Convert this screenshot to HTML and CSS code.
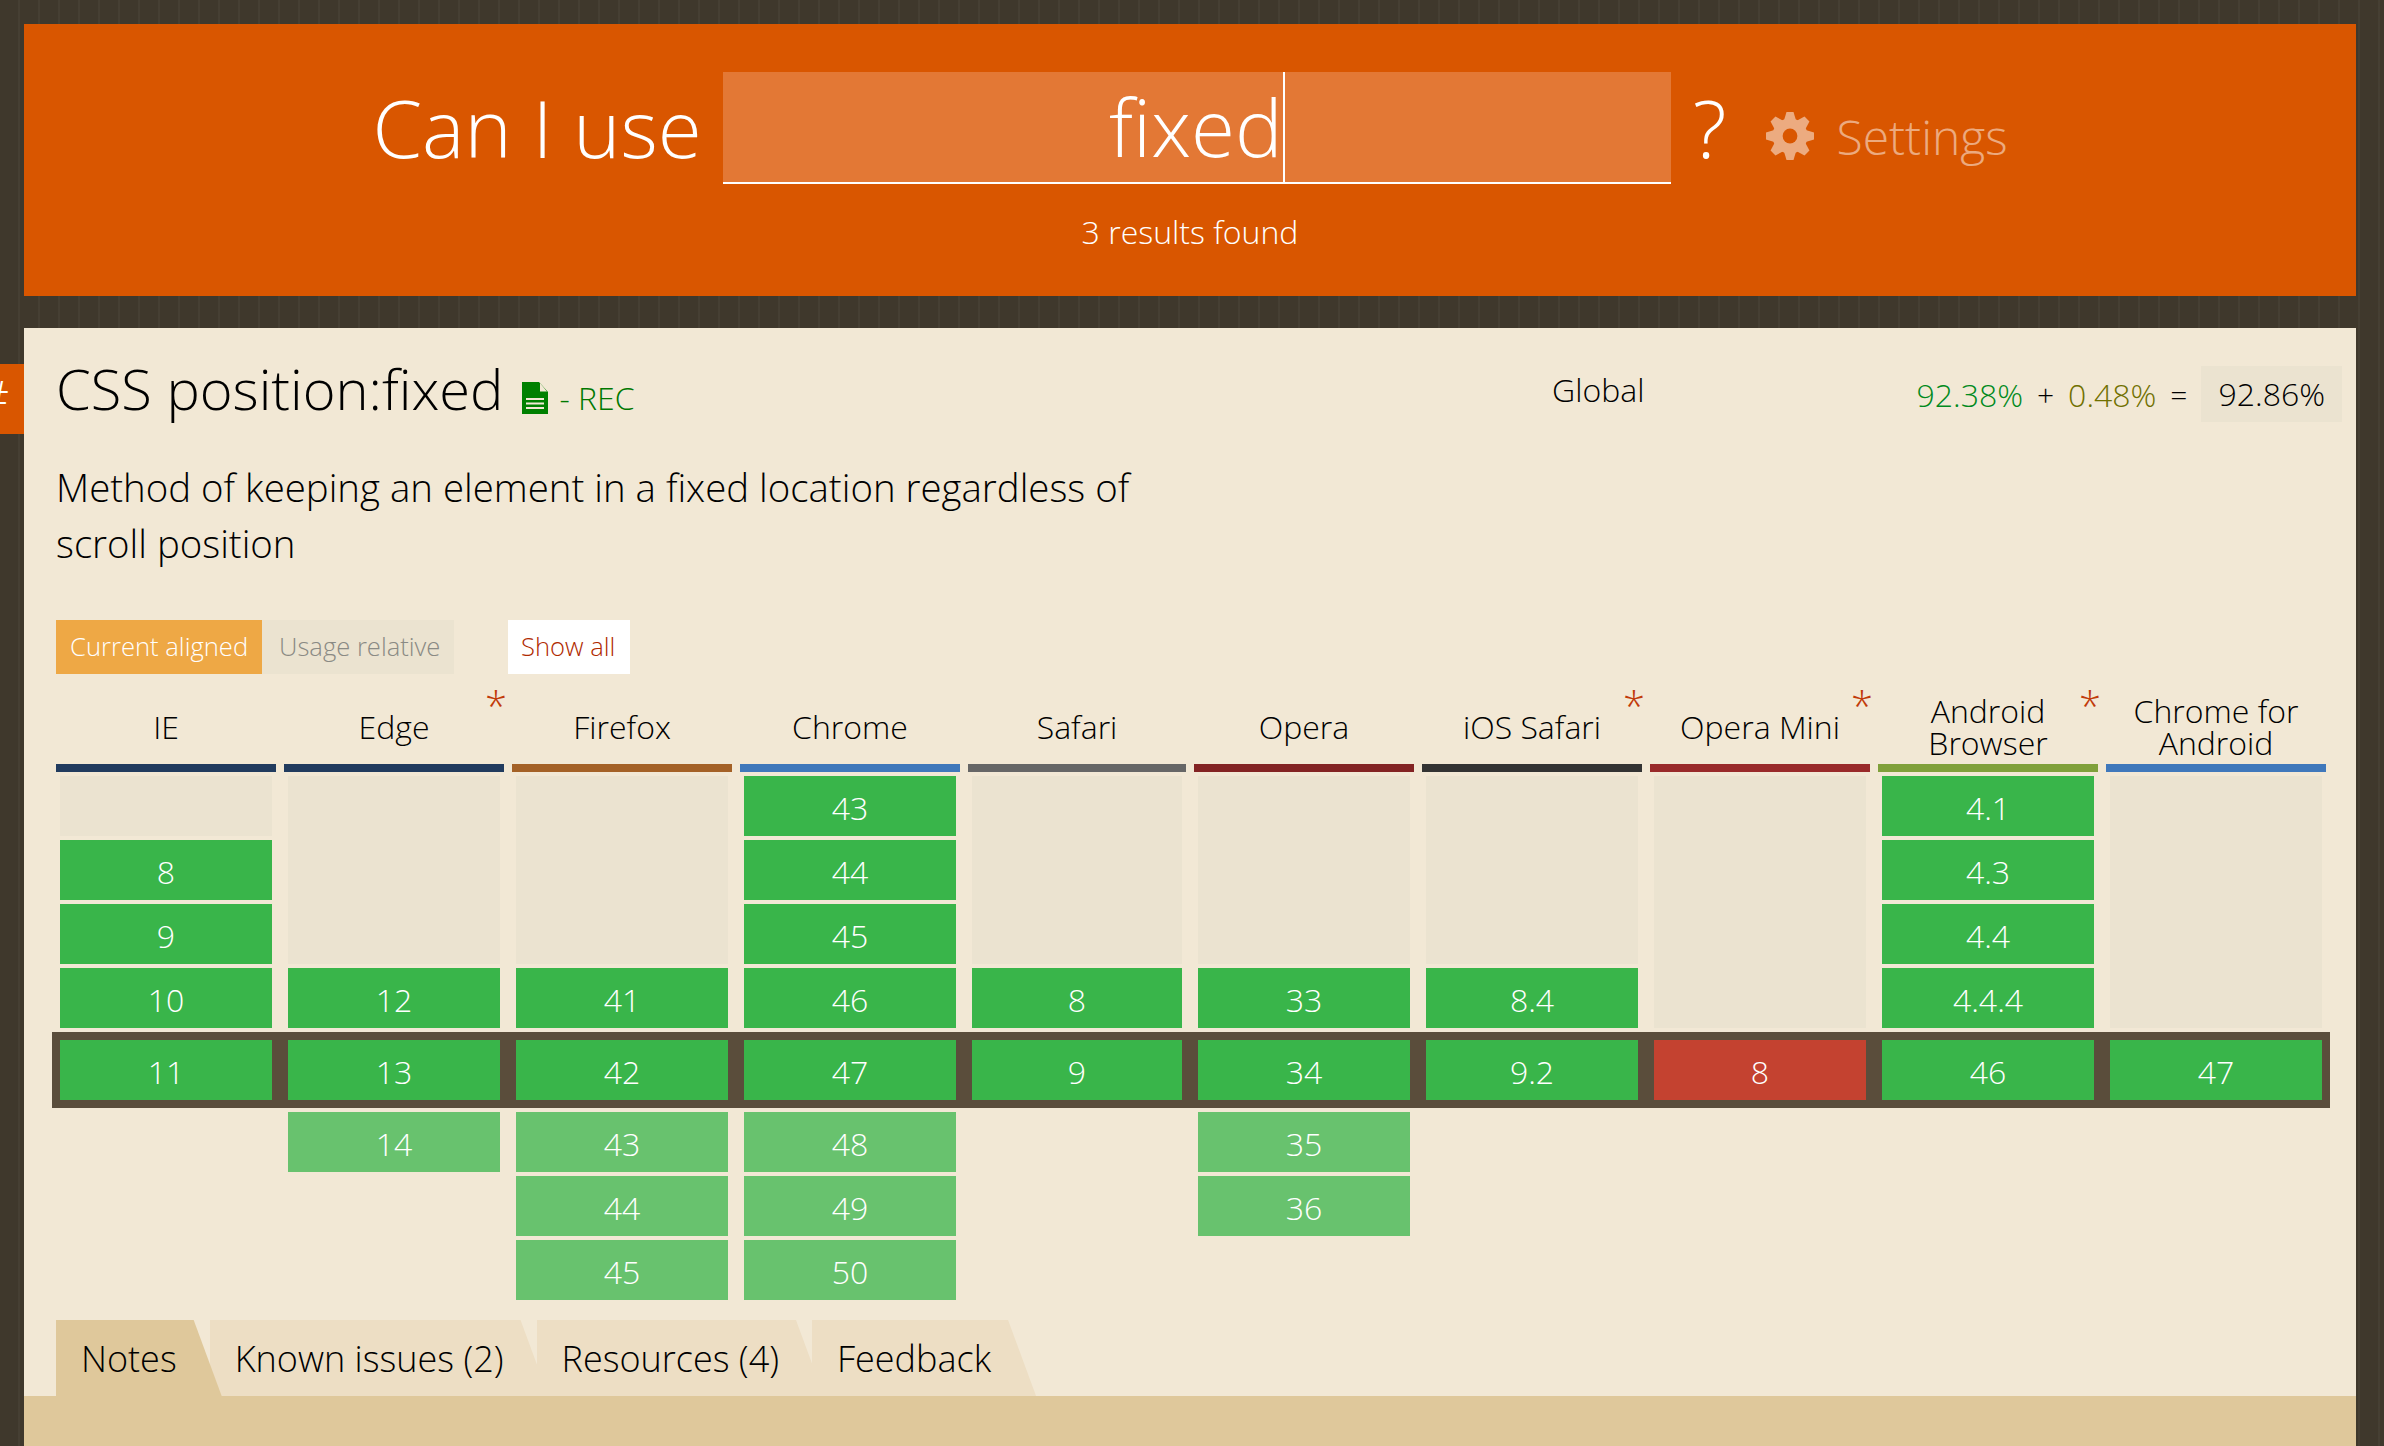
FILE: index.html
```html
<!DOCTYPE html>
<html lang="en">
<head>
<meta charset="utf-8">
<title>Can I use fixed?</title>
<link rel="stylesheet" href="styles.css">
</head>
<body>
<header class="site-header">
  <div class="search-row">
    <span class="can-i-use">Can I use</span>
    <div class="search-box"><span class="search-text">fixed</span></div>
    <span class="question">?</span>
    <a class="settings">
      <svg class="gear" viewBox="0 0 48 48" aria-hidden="true">
        <defs>
          <mask id="gear-hole"><rect width="48" height="48" fill="#fff"/><circle cx="24" cy="24" r="7.4" fill="#000"/></mask>
          <path id="gear-tooth" d="M17.5 10 L20.5 0 H27.5 L30.5 10 Z"/>
        </defs>
        <g mask="url(#gear-hole)" fill="#fff">
          <circle cx="24" cy="24" r="17.5"/>
          <use href="#gear-tooth"/>
          <use href="#gear-tooth" transform="rotate(45 24 24)"/>
          <use href="#gear-tooth" transform="rotate(90 24 24)"/>
          <use href="#gear-tooth" transform="rotate(135 24 24)"/>
          <use href="#gear-tooth" transform="rotate(180 24 24)"/>
          <use href="#gear-tooth" transform="rotate(225 24 24)"/>
          <use href="#gear-tooth" transform="rotate(270 24 24)"/>
          <use href="#gear-tooth" transform="rotate(315 24 24)"/>
        </g>
      </svg>
      <span>Settings</span>
    </a>
  </div>
  <p class="results">3 results found</p>
</header>

<main class="card">
  <a class="side-tab">#</a>
  <div class="intro">
    <div class="intro-main">
      <h1 class="title">CSS position:fixed
        <svg class="doc-icon" viewBox="0 0 26 32" aria-hidden="true">
          <path fill="#008000" d="M0 0H17L26 10V32H0Z"/>
          <path fill="#f2e8d5" d="M18 1L25 9.5H18Z"/>
          <path fill="#f2e8d5" d="M4 16H22V18H4ZM4 20.5H22V22.5H4ZM4 25H22V27H4Z"/>
        </svg>
        <span class="status">- REC</span></h1>
      <p class="description">Method of keeping an element in a fixed location regardless of scroll position</p>
    </div>
    <div class="stats">
      <span class="stats-label">Global</span>
      <div class="stats-values">
        <span class="pct-full">92.38%</span>
        <span class="op">+</span>
        <span class="pct-partial">0.48%</span>
        <span class="op">=</span>
        <span class="pct-total">92.86%</span>
      </div>
    </div>
  </div>

  <div class="controls">
    <div class="toggle-group">
      <a class="toggle toggle-on">Current aligned</a>
      <a class="toggle toggle-off">Usage relative</a>
    </div>
    <a class="show-all">Show all</a>
  </div>

  <div class="browsers">
    <div class="browser b-ie"><span>IE</span></div>
    <div class="browser b-edge"><span>Edge</span><i class="note">*</i></div>
    <div class="browser b-firefox"><span>Firefox</span></div>
    <div class="browser b-chrome"><span>Chrome</span></div>
    <div class="browser b-safari"><span>Safari</span></div>
    <div class="browser b-opera"><span>Opera</span></div>
    <div class="browser b-ios"><span>iOS Safari</span><i class="note">*</i></div>
    <div class="browser b-mini"><span>Opera Mini</span><i class="note">*</i></div>
    <div class="browser b-android"><span>Android<br>Browser</span><i class="note">*</i></div>
    <div class="browser b-chrome"><span>Chrome for<br>Android</span></div>
  </div>

  <div class="versions past">
    <div class="cell empty"></div><div class="cell y">8</div><div class="cell y">9</div><div class="cell y">10</div>
    <div class="cell empty span3"></div><div class="cell y">12</div>
    <div class="cell empty span3"></div><div class="cell y">41</div>
    <div class="cell y">43</div><div class="cell y">44</div><div class="cell y">45</div><div class="cell y">46</div>
    <div class="cell empty span3"></div><div class="cell y">8</div>
    <div class="cell empty span3"></div><div class="cell y">33</div>
    <div class="cell empty span3"></div><div class="cell y">8.4</div>
    <div class="cell empty span4"></div>
    <div class="cell y">4.1</div><div class="cell y">4.3</div><div class="cell y">4.4</div><div class="cell y">4.4.4</div>
    <div class="cell empty span4"></div>
  </div>

  <div class="current-band">
    <div class="versions current">
      <div class="cell y">11</div><div class="cell y">13</div><div class="cell y">42</div><div class="cell y">47</div><div class="cell y">9</div>
      <div class="cell y">34</div><div class="cell y">9.2</div><div class="cell n">8</div><div class="cell y">46</div><div class="cell y">47</div>
    </div>
  </div>

  <div class="versions future">
    <div class="cell span3"></div>
    <div class="cell f">14</div><div class="cell span2"></div>
    <div class="cell f">43</div><div class="cell f">44</div><div class="cell f">45</div>
    <div class="cell f">48</div><div class="cell f">49</div><div class="cell f">50</div>
    <div class="cell span3"></div>
    <div class="cell f">35</div><div class="cell f">36</div><div class="cell"></div>
    <div class="cell span3"></div><div class="cell span3"></div><div class="cell span3"></div><div class="cell span3"></div>
  </div>

  <nav class="tabs">
    <a class="tab tab-active">Notes</a>
    <a class="tab">Known issues (2)</a>
    <a class="tab">Resources (4)</a>
    <a class="tab">Feedback</a>
  </nav>
  <div class="tab-panel"></div>
</main>
</body>
</html>
```

FILE: styles.css
```css
* { box-sizing: border-box; }

html, body {
  height: 100%;
  overflow: hidden;
}

body {
  margin: 0;
  padding: 24px 28px 0 24px;
  background-color: #3f382c;
  background-image: repeating-linear-gradient(90deg, transparent 0, transparent 18px, rgba(255,255,255,.035) 18px, rgba(255,255,255,.035) 20px);
  font-family: "Open Sans", "Noto Sans", sans-serif;
  font-weight: 300;
  color: #000;
}

a { color: inherit; text-decoration: none; }

.site-header {
  height: 272px;
  background: #d95600;
  color: #fff;
  padding-top: 48px;
  margin-bottom: 32px;
}

.search-row {
  display: flex;
  justify-content: center;
  align-items: stretch;
  height: 112px;
}

.can-i-use {
  font-size: 80px;
  line-height: 110px;
  margin-right: 21px;
}

.search-box {
  width: 948px;
  height: 112px;
  background: #e37835;
  border-bottom: 2px solid #fff;
  text-align: center;
  font-size: 80px;
  line-height: 108px;
}

.search-text {
  display: inline-block;
  height: 110px;
  border-right: 2px solid #fff;
}

.question {
  font-size: 80px;
  line-height: 110px;
  margin-left: 22px;
  margin-right: 40px;
}

.settings {
  display: flex;
  align-items: center;
  gap: 22px;
  font-size: 48px;
  color: rgba(255,255,255,.5);
  height: 128px;
}

.gear {
  width: 48px;
  height: 48px;
  opacity: .5;
}

.results {
  margin: 26px 0 0;
  text-align: center;
  font-size: 32px;
  line-height: 44px;
  font-weight: 340;
}

.card {
  position: relative;
  background: #f2e8d5;
  padding: 0 0 0 32px;
  height: 1200px;
}

.side-tab {
  position: absolute;
  left: -24px;
  top: 36px;
  width: 24px;
  height: 70px;
  overflow: hidden;
  background: #d95600;
  color: #fff;
  font-size: 48px;
  line-height: 66px;
  text-indent: -22px;
  white-space: nowrap;
}

.intro {
  display: flex;
  justify-content: space-between;
  padding-right: 14px;
  height: 292px;
}

.intro-main {
  width: 1120px;
  padding-top: 20px;
}

.title {
  margin: 0;
  font-size: 56px;
  line-height: 80px;
  font-weight: 300;
}

.doc-icon {
  width: 26px;
  height: 32px;
  margin-left: 4px;
  vertical-align: -4px;
}

.status {
  font-size: 32px;
  color: #007800;
  margin-left: -3px;
}

.description {
  margin: 21px 0 0;
  font-size: 38.4px;
  line-height: 56px;
}

.stats {
  display: flex;
  align-items: flex-start;
  padding-top: 38px;
  gap: 272px;
}

.stats-label {
  font-size: 32px;
  line-height: 47px;
}

.stats-values {
  display: flex;
  align-items: center;
  gap: 14px;
  font-size: 32px;
  height: 56px;
}

.pct-full { color: #008a20; }
.pct-partial { color: #707000; }
.op { font-size: 30px; }

.pct-total {
  padding: 0 17px;
  height: 56px;
  line-height: 56px;
  background: #ebe3d0;
}

.controls {
  display: flex;
  height: 54px;
  gap: 54px;
  font-size: 25.6px;
  line-height: 53px;
  white-space: nowrap;
}

.toggle-group { display: flex; }
.toggle { display: block; padding: 0 14px; }
.toggle-on { background: #eea845; color: #fff; width: 206px; }
.toggle-off { background: #ebe3d0; color: #8a8a84; width: 192px; padding: 0 17px; }
.show-all { background: #fff; color: #b02a00; padding: 0 13px; width: 122px; }

.browsers,
.versions {
  display: grid;
  grid-template-columns: repeat(4, 220px) 218px repeat(5, 220px);
  column-gap: 8px;
  width: 2270px;
}

.browsers {
  height: 98px;
}

.browser {
  position: relative;
  display: flex;
  align-items: center;
  justify-content: center;
  text-align: center;
  font-size: 32px;
  line-height: 32px;
  border-bottom: 8px solid #333;
  padding-top: 15px;
}

.note {
  position: absolute;
  right: -3px;
  top: 12px;
  font-style: normal;
  font-size: 40px;
  line-height: 40px;
  color: #c13a0a;
}

.b-ie { border-color: #213b5e; }
.b-edge { border-color: #213b5e; }
.b-firefox { border-color: #a46126; }
.b-chrome { border-color: #4078bb; }
.b-safari { border-color: #666; }
.b-opera { border-color: #832323; }
.b-ios { border-color: #333; }
.b-mini { border-color: #992a2a; }
.b-android { border-color: #80a03a; }

.versions {
  grid-auto-flow: column;
  row-gap: 4px;
}

.past { grid-template-rows: repeat(4, 60px); margin-top: 4px; }
.current { grid-template-rows: 60px; }
.future { grid-template-rows: repeat(3, 60px); margin-top: 4px; }

.cell {
  margin: 0 4px;
  color: #fff;
  font-size: 32px;
  line-height: 64px;
  text-align: center;
}

.span2 { grid-row: span 2; }
.span3 { grid-row: span 3; }
.span4 { grid-row: span 4; }

.empty { background: #ebe3d0; }
.y { background: #39b54a; }
.n { background: #c44230; }
.f { background: #68c26e; }

.current-band {
  width: 2278px;
  margin: 4px 0 0 -4px;
  padding: 8px 4px;
  background: #5a4d3b;
}

.tabs {
  display: flex;
  height: 76px;
  margin-top: 20px;
}

.tab {
  display: block;
  margin-left: -12px;
  padding: 0 45px 0 25px;
  font-size: 36px;
  line-height: 78px;
  background: #eddec4;
  clip-path: polygon(0 0, calc(100% - 28px) 0, 100% 100%, 0 100%);
}

.tab-active {
  position: relative;
  z-index: 1;
  margin-left: 0;
  background: #dfc89b;
}

.tab-panel {
  height: 60px;
  margin-left: -32px;
  background: #dfc89b;
}
```
